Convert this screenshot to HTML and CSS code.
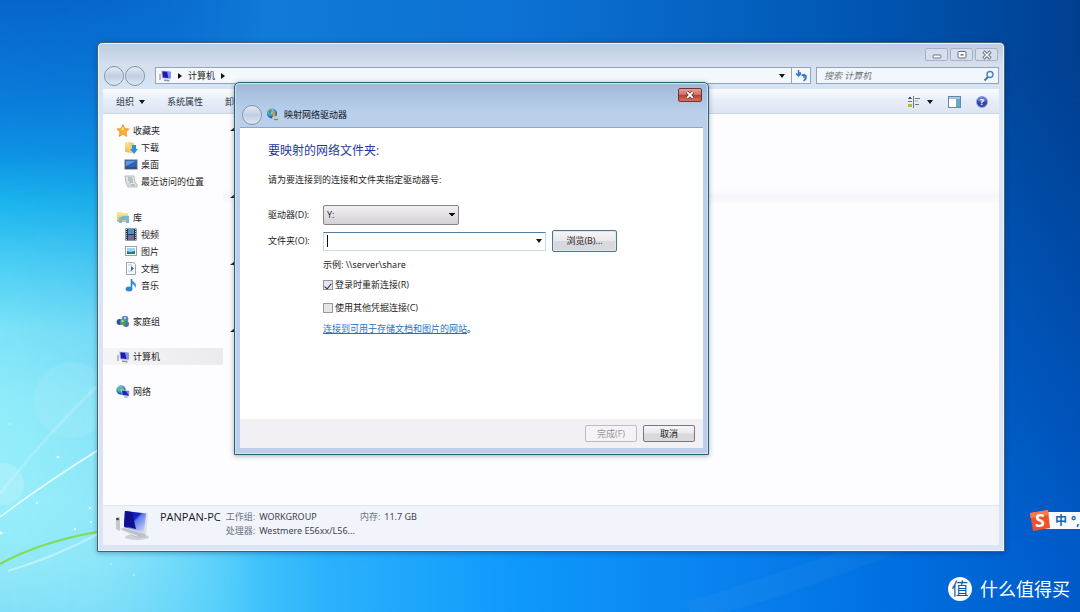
FILE: index.html
```html
<!DOCTYPE html>
<html lang="zh-CN">
<head>
<meta charset="utf-8">
<title>映射网络驱动器</title>
<link rel="stylesheet" href="styles.css">
</head>
<body>
<svg class="defs" aria-hidden="true">
  <defs>
    <linearGradient id="screen" x1="0" y1="0" x2="1" y2="1"><stop offset="0" stop-color="#0d0d9c"/><stop offset=".42" stop-color="#1a1fc4"/><stop offset=".5" stop-color="#5f7ce8"/><stop offset="1" stop-color="#dfe9fb"/></linearGradient>
    <linearGradient id="folder" x1="0" y1="0" x2="0" y2="1"><stop offset="0" stop-color="#fbe9a4"/><stop offset="1" stop-color="#e5b94e"/></linearGradient>
    <radialGradient id="globe" cx=".4" cy=".3" r=".7"><stop offset="0" stop-color="#b5ecff"/><stop offset=".6" stop-color="#2a8fd6"/><stop offset="1" stop-color="#0d4a92"/></radialGradient>
    <symbol id="pc" viewBox="0 0 14 12"><path d="M1 4h2v6H1z" fill="#b9bec8"/><path d="M3 .5l10 .7v8l-9-.7z" fill="#c3cadb"/><path d="M4.300 1.200l8 .8v6.300l-7.500-.7z" fill="#1a1bb8"/><path d="M9 1.800l3.300.3v6L10.500 8z" fill="#7f90e6"/><path d="M6 9.500l5 .3 1 1.600-6-.5z" fill="#8f959f"/></symbol>
  </defs>
</svg>
<main class="desktop">
  <div class="sky" aria-hidden="true"></div>
  <svg class="wallpaper" viewBox="0 0 1080 612" preserveAspectRatio="none" aria-hidden="true">
    <g fill="none" stroke="#fff">
      <path d="M0 517Q45 483 100 449" stroke-width="1.500" opacity=".8"/>
      <path d="M0 494Q40 442 97 386" stroke-width="3" opacity=".18"/>
      <path d="M8 571Q55 557 100 533" stroke-width="2" opacity=".4"/>
      <path d="M690 612Q800 580 900 540" stroke-width="22" opacity=".03"/>
    </g>
    <path d="M0 564Q40 542 97 532" fill="none" stroke="#82dc4e" stroke-width="2"/>
    <circle cx="3" cy="484" r="21" fill="#fff" opacity=".16"/>
    <circle cx="72" cy="400" r="38" fill="#fff" opacity=".08"/>
    <g fill="#fff" opacity=".85"><circle cx="58" cy="457" r="1.300"/><circle cx="37" cy="503" r="1"/><circle cx="90" cy="508" r="1.200"/><circle cx="75" cy="529" r="1.200"/><circle cx="1" cy="533" r="1.500"/><circle cx="91" cy="522" r="1"/></g>
    <g fill="#fff" opacity=".45"><circle cx="10" cy="424" r="1"/><circle cx="134" cy="575" r="1"/><circle cx="111" cy="564" r="1"/></g>
  </svg>

  <section class="explorer" aria-label="计算机">
    <header class="caption">
      <button class="cap" aria-label="最小化"><svg width="12" height="10" viewBox="0 0 12 10"><rect x="2" y="5" width="8" height="3" rx="1" fill="#fff" stroke="#6b7688"/></svg></button>
      <button class="cap" aria-label="最大化"><svg width="12" height="10" viewBox="0 0 12 10"><rect x="2" y="1.500" width="8" height="6.500" rx="1" fill="#fff" stroke="#5f6a7c"/><path d="M4.500 4.800h3" stroke="#5f6a7c" stroke-width="1.500"/></svg></button>
      <button class="cap" aria-label="关闭"><svg width="12" height="10" viewBox="0 0 12 10"><path d="M2.500 1.500l7 7m0-7l-7 7" stroke="#667185" stroke-width="3.200"/><path d="M3 2l6 6m0-6L3 8" stroke="#fff" stroke-width="1.300"/></svg></button>
    </header>
    <div class="navbar">
      <div class="travel"><button class="orb" aria-label="后退"></button><button class="orb" aria-label="前进"></button></div>
      <div class="address">
        <svg class="ico" width="14" height="12"><use href="#pc"/></svg>
        <i class="arrow-right"></i><span>计算机</span><i class="arrow-right"></i>
        <button class="drop" aria-label="以前的位置"><i class="arrow-down"></i></button>
        <button class="refresh" aria-label="刷新"><svg width="13" height="12" viewBox="0 0 13 12" fill="none" stroke="#2f78c4" stroke-width="1.500"><path d="M3.500 0v5M1 3.500l2.500 2.500L6 3.500M6 3h-2"/><path d="M6.500 5.500l2.500-1 2 1.500q.5 3-2.500 5M9 5v3"/></svg></button>
      </div>
      <label class="search"><input type="text" placeholder="搜索 计算机" aria-label="搜索 计算机"><svg width="12" height="12" viewBox="0 0 12 12"><circle cx="7" cy="4.500" r="3" fill="#f3faff" stroke="#4a83b8" stroke-width="1.400"/><path d="M5 7L1.500 10.500" stroke="#3c74ab" stroke-width="1.800"/></svg></label>
    </div>
    <div class="toolbar">
      <button class="tool">组织<i class="arrow-down"></i></button>
      <button class="tool">系统属性</button>
      <button class="tool">卸载或更改程序</button>
      <div class="tool-end">
        <button class="tool views" aria-label="更改视图"><svg width="13" height="12" viewBox="0 0 13 12"><g stroke="#6f7784" stroke-width="1"><path d="M1 2.500h4M1 5.500h4M8 2.500h5M8 8.500h4M6.500 0v12"/></g><path d="M2 1h2v2H2z" fill="#45516a"/><path d="M1 8h4v3H1z" fill="#b6bd35"/><path d="M8 5h3" stroke="#aab"/></svg><i class="arrow-down"></i></button>
        <button class="tool" aria-label="显示预览窗格"><svg width="13" height="12" viewBox="0 0 13 12"><rect x=".5" y=".5" width="12" height="11" fill="#fff" stroke="#6289ad"/><path d="M1 1h11v2H1z" fill="#a8c5dd"/><path d="M8 3h4v8H8z" fill="#68aac6"/></svg></button>
        <button class="tool" aria-label="帮助"><svg width="12" height="12" viewBox="0 0 12 12"><circle cx="6" cy="6" r="5.500" fill="#2b47ae" stroke="#9aa7cf"/><path d="M2 5a4 4 0 0 1 8 0Q6 7 2 5" fill="#7d99e0" opacity=".7"/><text class="help-mark" x="6" y="9" text-anchor="middle">?</text></svg></button>
      </div>
    </div>
    <div class="panes">
      <nav class="tree">
        <ul>
          <li class="root"><svg width="14" height="13" viewBox="0 0 14 13"><path d="M7 .5l1.900 4 4.300.5-3.200 3 .9 4.400L7 10.300l-3.900 2.100L4 8 .8 5l4.300-.5z" fill="#fbb034" stroke="#e48d1b" stroke-width=".7"/><path d="M7 2.500l1 3-3 1z" fill="#ffe596"/></svg><a href="#">收藏夹</a></li>
          <li><svg width="14" height="13" viewBox="0 0 14 13"><path d="M1 1h5l2 1v10l-7-1z" fill="url(#folder)"/><path d="M5 1l5 1v9l-5 1z" fill="#f0d080"/><path d="M8 4h4v4h2l-4 5-4-5h2z" fill="#2e91d4"/></svg><a href="#">下载</a></li>
          <li><svg width="14" height="13" viewBox="0 0 14 13"><rect x="1" y="2" width="12" height="9" fill="#2b62b5" stroke="#5f7187"/><path d="M2 3h10L2 8z" fill="#5f96dc"/><path d="M1 10h12" stroke="#333e57"/></svg><a href="#">桌面</a></li>
          <li><svg width="14" height="13" viewBox="0 0 14 13"><path d="M1 1h9l1 7 2 1v3H4L2 8z" fill="#e4e7e9" stroke="#a5acb0" stroke-width=".8"/><path d="M4 3h4M4 5h5M5 7h4M7 10h4" stroke="#8d989f"/><circle cx="5" cy="9" r="2" fill="#ccd6d6"/></svg><a href="#">最近访问的位置</a></li>
        </ul>
        <ul>
          <li class="root"><svg width="14" height="13" viewBox="0 0 14 13"><path d="M1 1h5l1 1h5v9H1z" fill="url(#folder)"/><path d="M3 7q4-3 10-2v7h-3V9H6v3H3z" fill="#76b6dc"/></svg><a href="#">库</a></li>
          <li><svg width="14" height="13" viewBox="0 0 14 13"><rect x="1.500" y=".5" width="11" height="12" fill="#26374d"/><path d="M4 1h6v5H4z" fill="#4e91bd"/><path d="M4 7h6v5H4z" fill="#77699c"/><path d="M2.500 1v11M11.500 1v11" stroke="#b4c3cf" stroke-dasharray="1 1"/></svg><a href="#">视频</a></li>
          <li><svg width="14" height="13" viewBox="0 0 14 13"><rect x="1.500" y="1.500" width="11" height="9" fill="#fff" stroke="#96a2ad"/><path d="M3 3h8v6H3z" fill="#9cd7ec"/><path d="M3 6l3 1 5-1v3H3z" fill="#26788c"/></svg><a href="#">图片</a></li>
          <li><svg width="14" height="13" viewBox="0 0 14 13"><path d="M2.500.5h7l2 2v10h-9z" fill="#f7f9fc" stroke="#9da7b5"/><path d="M4 3h4M4 9h5" stroke="#b3c4d9"/><path d="M7 4l3 2.500L7 9z" fill="#395f9c"/></svg><a href="#">文档</a></li>
          <li><svg width="14" height="13" viewBox="0 0 14 13"><path d="M7 0q1 2 4 4Q13 6 11 9.500 11.500 6 8 5" fill="#3998d0"/><path d="M7.500 0v10" stroke="#2b86c4" stroke-width="1.600"/><ellipse cx="5" cy="10" rx="3.400" ry="2.500" fill="#2d8ac6"/></svg><a href="#">音乐</a></li>
        </ul>
        <ul>
          <li class="root"><svg width="14" height="13" viewBox="0 0 14 13"><circle cx="3.500" cy="7" r="2.900" fill="#3449b0"/><circle cx="9" cy="4" r="3.300" fill="#5a83b5"/><circle cx="10" cy="9" r="3" fill="#4a72ae"/><circle cx="7" cy="7" r="3" fill="#46a257"/><circle cx="6.500" cy="6" r="1.200" fill="#a1dca0"/><circle cx="9" cy="3" r="1.200" fill="#aed9e6"/></svg><a href="#">家庭组</a></li>
        </ul>
        <ul>
          <li class="root selected"><svg width="14" height="12"><use href="#pc"/></svg><a href="#">计算机</a></li>
        </ul>
        <ul>
          <li class="root"><svg width="14" height="13" viewBox="0 0 14 13"><circle cx="5" cy="5" r="4.700" fill="url(#globe)"/><path d="M2 3l3-2 1 2-2 3-2-1zM6 5l2-2v3z" fill="#67bb5c"/><path d="M5 4.500l8.500 1v6L6 10.500z" fill="#c7d3e8"/><path d="M6 5.500l7 .8v4.500L6.500 10z" fill="#1c27b4"/><path d="M10 6l3 .3v4.400z" fill="#7f90e6"/><path d="M8 12h4" stroke="#8890a0"/></svg><a href="#">网络</a></li>
        </ul>
      </nav>
      <div class="content"><i class="fold"></i><i class="fold"></i><i class="fold"></i><i class="fold"></i></div>
    </div>
    <footer class="details">
      <svg width="36" height="32" viewBox="0 0 36 32"><ellipse cx="22" cy="28" rx="12" ry="3" fill="#a7abb4" opacity=".5"/><path d="M1 9l4-1v14l-4-2z" fill="#c4c8ce"/><circle cx="2.500" cy="10" r="1.300" fill="#333"/><path d="M9 2l24 2-2 23-22-6z" fill="#d9dfeb"/><path d="M10 2l21 2.500-2 19L9 18z" fill="url(#screen)"/><path d="M10 2l7 1 4 17-12-3z" fill="#10108f"/><path d="M5 20l4-1 21 6 1 3-9 1z" fill="#bcc1ca"/><path d="M6 21l16 6" stroke="#eee"/></svg>
      <strong class="host">PANPAN-PC</strong>
      <dl><dt>工作组:</dt><dd>WORKGROUP</dd><dt>处理器:</dt><dd>Westmere E56xx/L56...</dd></dl>
      <dl><dt>内存:</dt><dd>11.7 GB</dd></dl>
    </footer>
  </section>

  <form class="dialog" role="dialog" aria-label="映射网络驱动器">
    <header class="dlg-head">
      <button type="button" class="close" aria-label="关闭"><svg width="12" height="8" viewBox="0 0 12 8"><path d="M3 1l6 6m0-6L3 7" stroke="#713236" stroke-width="3.400"/><path d="M3.200 1.200l5.600 5.600m0-5.600L3.200 6.800" stroke="#fff" stroke-width="1.900"/></svg></button>
      <div class="dlg-title"><button type="button" class="orb" aria-label="后退"></button><svg width="14" height="14" viewBox="0 0 14 14"><circle cx="6" cy="5.500" r="5" fill="url(#globe)"/><path d="M2 3l3-2 1 2-2 4zM7 6l3-2v3z" fill="#4da05a"/><path d="M6 3h2l2 6H7z" fill="#dc955e"/><path d="M6 9l6-1 1 4-6 1z" fill="#c7cfd1"/><path d="M8 11.500h4" stroke="#4fa85b" stroke-width="1.300"/></svg><span>映射网络驱动器</span></div>
    </header>
    <div class="dlg-body">
      <h1>要映射的网络文件夹:</h1>
      <p class="hint">请为要连接到的连接和文件夹指定驱动器号:</p>
      <div class="fields">
        <label for="drive">驱动器(D):</label>
        <select id="drive"><option>Y:</option></select>
        <label for="folder-path">文件夹(O):</label>
        <div class="folder-row">
          <div class="combo"><input id="folder-path" type="text"><button type="button" aria-label="展开列表"><i class="arrow-down"></i></button></div>
          <button type="button" class="btn browse">浏览(B)...</button>
        </div>
        <div class="options">
          <p>示例: <span class="path">\\server\share</span></p>
          <label><input type="checkbox" checked>登录时重新连接(R)</label>
          <label><input type="checkbox">使用其他凭据连接(C)</label>
          <p><a href="#">连接到可用于存储文档和图片的网站</a>。</p>
        </div>
      </div>
    </div>
    <footer class="dlg-foot"><button type="button" class="btn" disabled>完成(F)</button><button type="button" class="btn">取消</button></footer>
  </form>

  <aside class="ime"><svg width="22" height="24" viewBox="0 0 22 24"><path d="M1 4L19 1l2 18-17 3z" fill="#ee5229"/><path d="M1 4L19 1l.5 5L1.500 9z" fill="#f57b4b"/><text class="ime-logo" x="11" y="18" text-anchor="middle">S</text></svg><span>中</span><span class="punct">°,</span></aside>
  <aside class="brand"><span class="brand-mark">值</span><span>什么值得买</span></aside>
</main>
</body>
</html>
```
FILE: styles.css
```css
* { box-sizing: border-box; }
body {
  margin: 0;
  font: 9px/16px "Open Sans", "Noto Sans CJK SC", sans-serif;
  color: #1c1c22;
}
button, input, select { font: inherit; color: inherit; margin: 0; }
button { padding: 0; border: 0; background: none; }
a { color: inherit; text-decoration: none; }
svg { display: block; flex: none; }
.defs { position: absolute; width: 0; height: 0; }

.desktop {
  position: relative;
  min-height: 100vh;
  overflow: hidden;
  background: linear-gradient(90deg, #0765cc 0, #107bd8 25%, #0b70d2 50%, #0054b0 82%, #003f90 100%);
}
.sky, .sky::before, .sky::after { position: absolute; inset: 0; content: ""; }
.sky::before {
  background: linear-gradient(90deg, #84e2f8 0, #46c8fc 22%, #2cb2fb 30%, #0f98fc 48%, #0a84f0 65%, #006fe0 83%, #005ac8 100%);
  mask-image: linear-gradient(180deg, transparent 10%, #000 92%);
}
.sky::after {
  background: linear-gradient(180deg, #0665cb 0, #0a7cda 16%, #0d92e4 25%, #1ab4ee 33%, #4bcef4 43%, #7de3f8 54%, #90ecfa 66%, #98eefa 82%, #92e8f8 92%, #84e0f8 100%);
  mask-image: linear-gradient(90deg, #000 0, rgba(0, 0, 0, .85) 9%, transparent 24%);
}
.wallpaper { position: absolute; inset: 0; width: 100%; height: 100%; }

.explorer {
  position: absolute;
  inset: 42px 75px 60px 97px;
  display: flex;
  flex-direction: column;
  padding: 0 5px 6px;
  border: 1px solid #48606f;
  border-radius: 5px 5px 0 0;
  background: linear-gradient(180deg, #bdcce1 0, #d5dfee 22px, #d6e5f5 48px, #dbe3f5 100%);
  box-shadow: inset 0 0 0 1px #e9f1fa, 0 1px 5px rgba(0, 30, 80, .35);
}
.caption { display: flex; justify-content: flex-end; gap: 2px; padding: 5px 1px 0; height: 20px; }
.cap {
  display: grid;
  place-items: center;
  width: 23px;
  height: 13px;
  border: 1px solid #a5b1c4;
  border-radius: 2px;
  background: #d5deec;
}
.navbar { display: flex; align-items: center; gap: 5px; height: 25px; }
.travel { display: flex; gap: 1px; margin: 0 5px 0 1px; }
.orb {
  width: 20px;
  height: 20px;
  border: 1px solid #8193aa;
  border-radius: 50%;
  background: linear-gradient(180deg, #e5edf6 0, #bfcee1 50%, #dce8f4 100%);
  box-shadow: inset 0 0 0 1px #d9e4f0;
}
.address {
  display: flex;
  align-items: center;
  flex: 1;
  gap: 6px;
  height: 17px;
  padding-left: 2px;
  border: 1px solid #93a4bb;
  background: #f4f8fd;
}
.arrow-right { border-left: 4px solid #111; border-top: 3px solid transparent; border-bottom: 3px solid transparent; }
.arrow-down { display: inline-block; border-top: 4px solid #15151f; border-left: 3px solid transparent; border-right: 3px solid transparent; }
.drop { display: grid; place-items: center; margin-left: auto; }
.refresh { display: grid; place-items: center; width: 19px; height: 100%; border-left: 1px solid #93a4bb; }
.search {
  display: flex;
  align-items: center;
  width: 183px;
  height: 17px;
  padding: 0 3px 0 7px;
  border: 1px solid #93a4bb;
  background: #f1f6fc;
}
.search input { flex: 1; min-width: 0; padding: 0; border: 0; outline: 0; background: none; }
.search input::placeholder { color: #6b7078; font-style: italic; opacity: 1; }
.toolbar {
  display: flex;
  align-items: center;
  gap: 22px;
  height: 25px;
  margin-top: 1px;
  padding: 0 13px;
  border-top: 1px solid #f8fbfe;
  border-bottom: 1px solid #cbd5e4;
  background: linear-gradient(180deg, #f8fbfe 0, #e8eef8 45%, #dde5f2 100%);
  color: #29364c;
}
.tool { display: flex; align-items: center; gap: 5px; white-space: nowrap; }
.tool-end { display: flex; gap: 15px; margin-left: auto; margin-right: -2px; }
.views { gap: 7px; }
.help-mark { font: bold 9px "Open Sans", sans-serif; fill: #fff; }
.panes { display: flex; flex: 1; min-height: 0; background: #fdfdff; }
.tree { display: flex; flex-direction: column; gap: 18px; width: 120px; padding-top: 8px; }
.tree ul { margin: 0; padding: 0; list-style: none; }
.tree li { display: flex; align-items: center; gap: 3px; height: 17px; padding-left: 21px; }
.tree li.root { padding-left: 13px; }
.tree li.selected { background: linear-gradient(90deg, #f5f5f7, #ebebee); }
.tree ul:has(li + li) { padding-bottom: 1px; }
.content {
  flex: 1;
  display: flex;
  flex-direction: column;
  gap: 63px;
  padding: 13px 0 0 7px;
  background: linear-gradient(180deg, transparent 76px, #f5f4fc 82px, transparent 90px);
}
.fold { width: 5px; border-left: 5px solid transparent; border-bottom: 4px solid #222; }
.details {
  display: flex;
  gap: 5px;
  height: 40px;
  padding: 3px 12px 0;
  border-top: 1px solid #e0e4ec;
  background: #f2f4fc;
  line-height: 14px;
  color: #3c4350;
}
.host { margin: 1px 0 0 4px; font-size: 11px; font-weight: 400; color: #17171c; }
.details dl { display: grid; grid-template-columns: auto auto; align-content: start; column-gap: 4px; margin: 1px 0 0; }
.details dt { color: #6a7180; }
.details dd { margin: 0; font-family: "Noto Sans", sans-serif; }

.dialog {
  position: absolute;
  left: 234px;
  top: 82px;
  width: 475px;
  min-height: 373px;
  display: flex;
  flex-direction: column;
  padding: 0 5px 6px;
  border: 1px solid #28616f;
  border-radius: 5px 5px 0 0;
  background: linear-gradient(180deg, #9fb8d6 0, #aac1df 10px, #b9cfea 30px, #bccfea 100%);
  box-shadow: inset 0 0 0 1px #cfe2f4, 0 1px 5px rgba(30, 50, 80, .4);
}
.dlg-head { display: flex; flex-direction: column; height: 44px; padding-top: 5px; }
.close {
  display: grid;
  place-items: center;
  align-self: flex-end;
  width: 24px;
  height: 14px;
  margin-right: 1px;
  border: 1px solid #6e3538;
  border-radius: 2px;
  background: linear-gradient(180deg, #e1a197 0, #d27468 45%, #bd3c2e 50%, #d4735b 100%);
}
.dlg-title { display: flex; align-items: center; gap: 4px; margin: 3px 0 0 2px; color: #10131c; }
.dlg-body { flex: 1; padding: 14px 28px 0; background: #fff; border-top: 1px solid #8ea7c4; }
h1 { margin: 0 0 12px; font-size: 12px; line-height: 18px; font-weight: 400; color: #1f3a9c; }
.hint { margin: 0; }
.fields { display: grid; grid-template-columns: 50px 1fr; column-gap: 5px; row-gap: 5px; align-items: center; margin-top: 17px; }
select {
  width: 136px;
  height: 20px;
  padding: 0 4px 0 3px;
  appearance: none;
  border: 1px solid #85838b;
  border-radius: 2px;
  background:
    linear-gradient(to bottom left, #111 50%, transparent 50%) right 6px center / 3px 4px no-repeat,
    linear-gradient(to bottom right, #111 50%, transparent 50%) right 3px center / 3px 4px no-repeat,
    linear-gradient(180deg, #f0eef1 0, #e4e1e6 50%, #d3d0d6 100%);
}
.folder-row { display: flex; align-items: center; gap: 6px; }
.combo { display: flex; width: 223px; height: 19px; border: 1px solid #c6dbe8; border-top-color: #4f7f9d; background: #fff; }
.combo input {
  flex: 1;
  min-width: 0;
  padding: 0 6px;
  border: 0;
  outline: 0;
  background: linear-gradient(#111, #111) 3px 2px / 1px 12px no-repeat;
}
.combo button { width: 12px; display: grid; place-items: center; }
.btn {
  width: 52px;
  height: 17px;
  border: 1px solid #77777f;
  border-radius: 2px;
  background: linear-gradient(180deg, #f6f6f7 0, #e9e9ec 48%, #d7d7dc 52%, #dadade 100%);
}
.btn:disabled { border-color: #bcbcc2; background: #f5f3f6; color: #96969c; }
.browse { width: 65px; height: 22px; border-color: #557488; box-shadow: inset 0 0 0 1px #d3eaf5; }
.options { grid-column: 2; display: flex; flex-direction: column; }
.options p { margin: 0; }
.options p:first-child { margin-bottom: 4px; }
.options label { display: flex; align-items: center; gap: 2px; margin-bottom: 7px; }
.options label + p { margin-top: -2px; }
.path { font-family: "Noto Sans", sans-serif; }
.options a { color: #1c73c8; text-decoration: underline; }
input[type="checkbox"] {
  display: grid;
  place-items: center;
  appearance: none;
  width: 10px;
  height: 10px;
  border: 1px solid #98969d;
  background: #e7e5e9;
}
input[type="checkbox"]:checked::before {
  content: "";
  width: 3px;
  height: 6px;
  border: solid #2c2c5c;
  border-width: 0 1px 1px 0;
  transform: rotate(40deg);
}
.dlg-foot { display: flex; align-items: center; justify-content: flex-end; gap: 6px; height: 29px; padding: 0 8px; background: #f2f0f4; }

.ime {
  position: absolute;
  right: 0;
  top: 512px;
  display: flex;
  align-items: center;
  gap: 4px;
  width: 51px;
  height: 17px;
  background: linear-gradient(90deg, transparent 14px, #f6faff 14px);
  color: #1567b0;
  font-size: 12px;
  font-weight: 700;
}
.ime-logo { font: bold 18px "Open Sans", sans-serif; fill: #fff; }
.punct { white-space: nowrap; }
.brand {
  position: absolute;
  right: 10px;
  bottom: 10px;
  display: flex;
  align-items: center;
  gap: 8px;
  color: #fff;
  font-size: 18px;
  line-height: 26px;
}
.brand-mark { width: 24px; height: 24px; border-radius: 50%; background: #fff; color: #0e5ba8; font-size: 17px; line-height: 23px; text-align: center; }
```
